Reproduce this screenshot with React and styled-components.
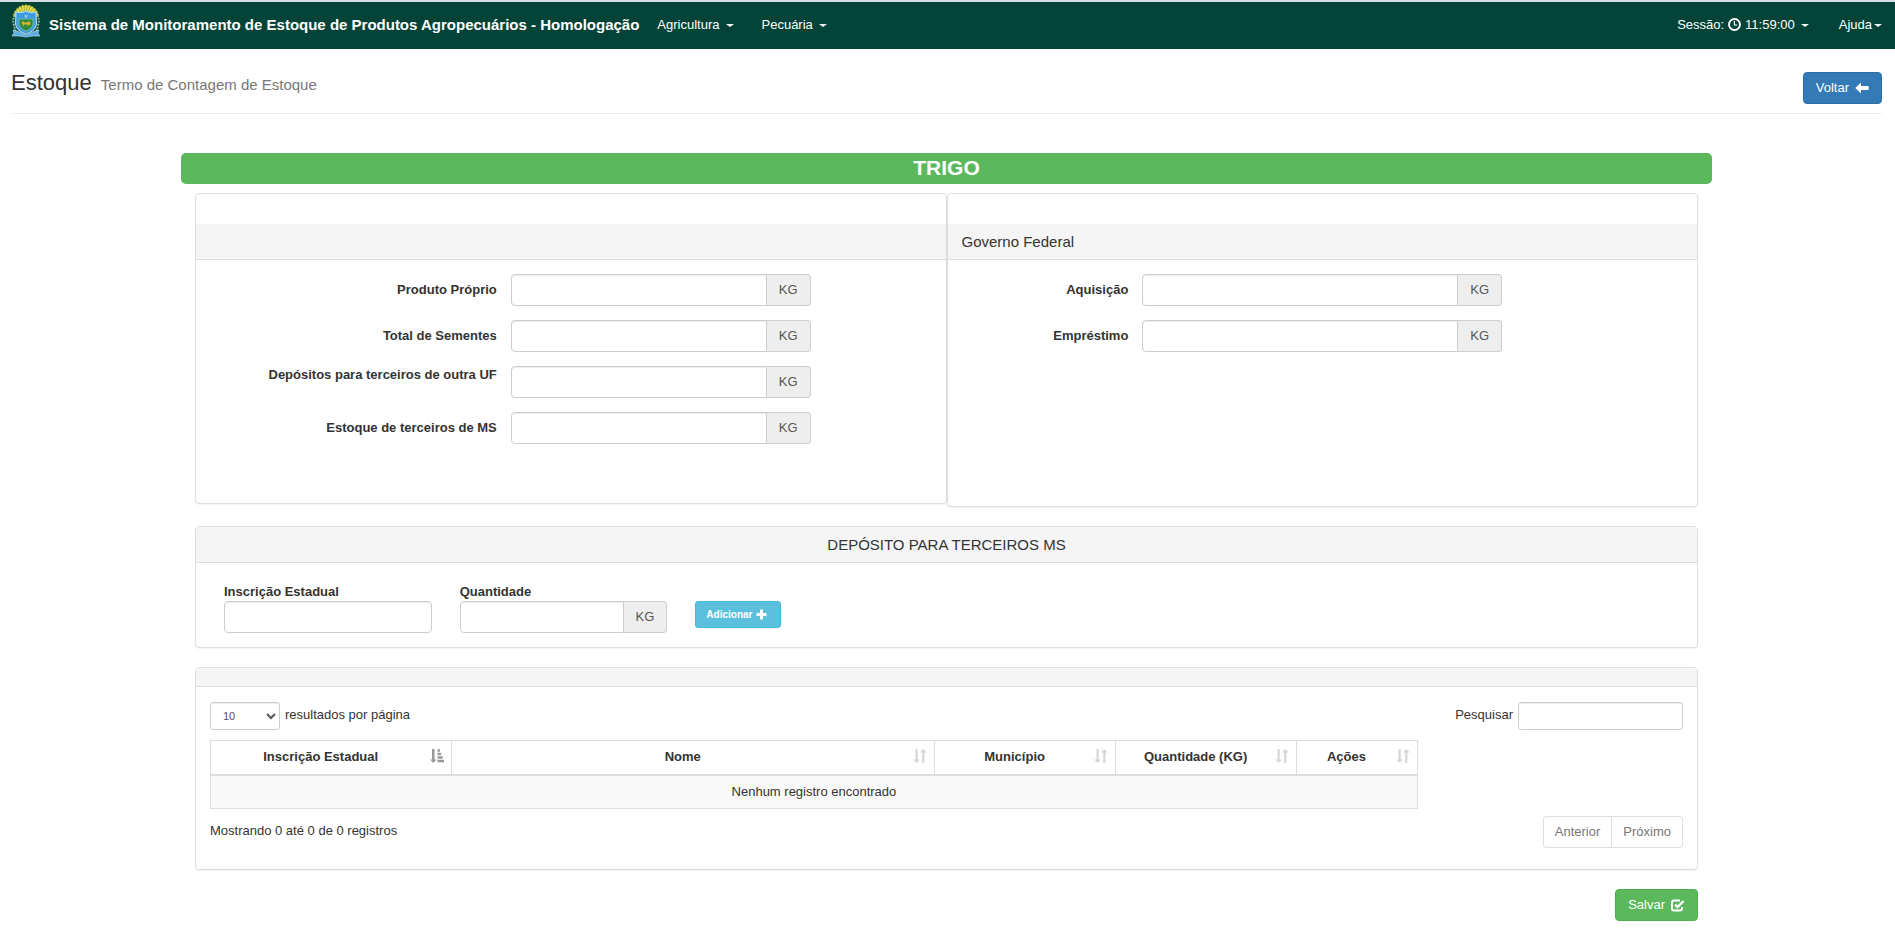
import styled, { createGlobalStyle } from "styled-components"

const GlobalStyle = createGlobalStyle`
    * {
        box-sizing: border-box;
    }

    body {
        margin: 0;
        background: #fff;
        color: #333;
        font-family: "Liberation Sans", Arial, Helvetica, sans-serif;
        font-size: 13px;
        line-height: 18px;
    }

    input, select, button {
        font-family: inherit;
    }
`

const stockFields = [
  { id: "produtoProprio", label: "Produto Próprio" },
  { id: "totalSementes", label: "Total de Sementes" },
  { id: "depositosOutraUf", label: "Depósitos para terceiros de outra UF", raised: true },
  { id: "estoqueMs", label: "Estoque de terceiros de MS" },
]

const federalFields = [
  { id: "aquisicao", label: "Aquisição" },
  { id: "emprestimo", label: "Empréstimo" },
]

const columns = [
  { title: "Inscrição Estadual", width: 20, sorted: true },
  { title: "Nome", width: 40 },
  { title: "Município", width: 15 },
  { title: "Quantidade (KG)", width: 15 },
  { title: "Ações", width: 10 },
]

const rays = [-75, -60, -45, -30, -15, 0, 15, 30, 45, 60, 75]

const Crest = () => (
  <svg width="30" height="34" viewBox="0 0 30 34" aria-hidden="true">
    {rays.map((angle) => (
      <path key={angle} d="M13.9 12 L13.1 1.6 L15 0.6 L16.9 1.6 L16.1 12 Z" fill="#e9e04a" stroke="#5d7d35" strokeWidth=".5" transform={`rotate(${angle} 15 14)`} />
    ))}
    <path d="M4 11 Q1 16 3 21 L4 26 L7 29 M26 11 Q29 16 27 21 L26 26 L23 29" fill="none" stroke="#8fb68f" strokeWidth="2" strokeDasharray="2 1" />
    <path d="M2 26 L8 28 L15 31 L22 28 L28 26 L27 29 L29 32 L22 32 L15 33 L8 32 L1 32 L3 29 Z" fill="#5eaee6" stroke="#b9dcf2" strokeWidth=".6" />
    <path d="M5 8 Q11 9.500 15 7 Q19 9.500 25 8 L25.500 20 Q24 27.500 15 30 Q6 27.500 4.500 20 Z" fill="#3d9be0" stroke="#a8d4ee" strokeWidth="1.200" />
    <path d="M8 15 H22 V20 Q21 25 15 27 Q9 25 8 20 Z" fill="#2d8a3e" stroke="#7cc0a0" strokeWidth=".8" />
    <path d="M10.500 18 L12 17.200 L13.500 18.500 L17 18 L19 17.200 L19.500 21 L18 20.500 L17.500 22.500 L16.500 20.500 L13 20.500 L12.500 22.500 L11.500 20.500 Z" fill="#dcb52c" />
    <path d="M15 9.800 L15.600 11.400 L17.200 11.400 L16 12.400 L16.400 14 L15 13 L13.600 14 L14 12.400 L12.800 11.400 L14.400 11.400 Z" fill="#9bd3f5" />
  </svg>
)

const ClockIcon = () => (
  <svg width="13" height="13" viewBox="0 0 13 13" aria-hidden="true">
    <circle cx="6.500" cy="6.500" r="5.500" fill="none" stroke="currentColor" strokeWidth="1.900" />
    <path d="M6.400 3 V7 H9.200" fill="none" stroke="currentColor" strokeWidth="1.200" />
  </svg>
)

const ArrowLeftIcon = () => (
  <svg width="14" height="13" viewBox="0 0 14 13" aria-hidden="true">
    <path d="M0.300 6 L6 0.600 V4 H13 Q13.600 4 13.600 4.600 V7.400 Q13.600 8 13 8 H6 V11.400 Z" fill="currentColor" />
  </svg>
)

const PlusIcon = () => (
  <svg width="11" height="11" viewBox="0 0 11 11" aria-hidden="true">
    <path d="M4 0.500 H7 V4 H10.500 V7 H7 V10.500 H4 V7 H0.500 V4 H4 Z" fill="currentColor" />
  </svg>
)

const CheckIcon = () => (
  <svg width="14" height="13" viewBox="0 0 14 13" aria-hidden="true">
    <path d="M9 1.500 H3 Q1 1.500 1 3.500 V9.500 Q1 11.500 3 11.500 H9 Q11 11.500 11 9.500 V8" fill="none" stroke="currentColor" strokeWidth="2" />
    <path d="M4 5.500 L6.500 8 L12.600 2" fill="none" stroke="currentColor" strokeWidth="2.400" />
  </svg>
)

const SortIcon = () => (
  <svg width="14" height="14" viewBox="0 0 14 14" aria-hidden="true">
    <path d="M2.500 0 H4.700 V10.500 H7 L3.600 14 L0.200 10.500 H2.500 Z" fill="currentColor" />
    <path d="M9.200 14 H11.400 V3.500 H13.700 L10.300 0 L6.900 3.500 H9.200 Z" fill="currentColor" />
  </svg>
)

const SortedIcon = () => (
  <svg width="14" height="14" viewBox="0 0 14 14" aria-hidden="true">
    <path d="M2 0 H4.500 V10.500 H6.600 L3.300 14 L0 10.500 H2 Z" fill="currentColor" />
    <path d="M7.500 0.300 H10 V2.800 H7.500 Z M7.500 3.800 H11.200 V6.300 H7.500 Z M7.500 7.300 H12.600 V9.800 H7.500 Z M7.500 10.800 H14 V13.300 H7.500 Z" fill="currentColor" />
  </svg>
)

const KgField = ({ id, label, raised, labelWidth, fieldWidth }) => (
  <FieldRow>
    <FieldLabel htmlFor={id} $raised={raised} $width={labelWidth}>{label}</FieldLabel>
    <InputGroup $width={fieldWidth}>
      <Input id={id} type="text" />
      <Addon>KG</Addon>
    </InputGroup>
  </FieldRow>
)

export default function App() {
  return (
    <>
      <GlobalStyle />
      <Navbar>
        <Brand href="#">
          <Crest />
          Sistema de Monitoramento de Estoque de Produtos Agropecuários - Homologação
        </Brand>
        <NavLink href="#">Agricultura <Caret /></NavLink>
        <NavLink href="#">Pecuária <Caret /></NavLink>
        <NavRight>
          <NavLink href="#">Sessão: <ClockIcon /> 11:59:00 <Caret /></NavLink>
          <NavLink href="#" $tight>Ajuda<Caret /></NavLink>
        </NavRight>
      </Navbar>

      <Page>
        <PageHeader>
          <Title>Estoque <small>Termo de Contagem de Estoque</small></Title>
          <Button type="button" $color="#337ab7" $border="#2e6da4">Voltar <ArrowLeftIcon /></Button>
        </PageHeader>

        <Content>
          <ProductBar>TRIGO</ProductBar>
          <Panels>
            <PanelRow>
              <Panel $spaced>
                <PanelHeading />
                <FormBody $minHeight={243}>
                  {stockFields.map((field) => (
                    <KgField key={field.id} {...field} labelWidth={42} fieldWidth={40} />
                  ))}
                </FormBody>
              </Panel>
              <Panel $spaced>
                <PanelHeading>Governo Federal</PanelHeading>
                <FormBody $minHeight={246}>
                  {federalFields.map((field) => (
                    <KgField key={field.id} {...field} labelWidth={26} fieldWidth={48} />
                  ))}
                </FormBody>
              </Panel>
            </PanelRow>

            <Panel>
              <PanelHeading $center>DEPÓSITO PARA TERCEIROS MS</PanelHeading>
              <DepositForm>
                <DepositColumn>
                  <label htmlFor="inscricao">Inscrição Estadual</label>
                  <Input id="inscricao" type="text" />
                </DepositColumn>
                <DepositColumn>
                  <label htmlFor="quantidade">Quantidade</label>
                  <InputGroup>
                    <Input id="quantidade" type="text" />
                    <Addon>KG</Addon>
                  </InputGroup>
                </DepositColumn>
                <AddColumn>
                  <SmallButton type="button" $color="#5bc0de" $border="#46b8da">Adicionar <PlusIcon /></SmallButton>
                </AddColumn>
              </DepositForm>
            </Panel>

            <Panel>
              <PanelHeading $empty />
              <TableBody>
                <Toolbar>
                  <ToolLabel>
                    <PageSize defaultValue="10">
                      <option>10</option>
                      <option>25</option>
                      <option>50</option>
                      <option>100</option>
                    </PageSize>
                    resultados por página
                  </ToolLabel>
                  <ToolLabel>
                    Pesquisar
                    <SearchInput type="search" />
                  </ToolLabel>
                </Toolbar>
                <Table>
                  <thead>
                    <tr>
                      {columns.map(({ title, width, sorted }) => (
                        <HeaderCell key={title} scope="col" $width={width} $sorted={sorted}>
                          {title}
                          {sorted ? <SortedIcon /> : <SortIcon />}
                        </HeaderCell>
                      ))}
                    </tr>
                  </thead>
                  <tbody>
                    <tr>
                      <EmptyCell colSpan={columns.length}>Nenhum registro encontrado</EmptyCell>
                    </tr>
                  </tbody>
                </Table>
                <TableFooter>
                  <p>Mostrando 0 até 0 de 0 registros</p>
                  <Pager>
                    <button type="button">Anterior</button>
                    <button type="button">Próximo</button>
                  </Pager>
                </TableFooter>
              </TableBody>
            </Panel>

            <Actions>
              <Button type="submit" $color="#5cb85c" $border="#4cae4c">Salvar <CheckIcon /></Button>
            </Actions>
          </Panels>
        </Content>
      </Page>
    </>
  )
}

const Navbar = styled.nav`
    display: flex;
    align-items: stretch;
    height: 49px;
    padding: 0 13px 0 11px;
    border-top: 2px solid #d5dfe3;
    background: #044438;
    color: #fff;
`

const Brand = styled.a`
    display: flex;
    gap: 8px;
    padding-right: 4px;
    color: #fff;
    font-size: 15px;
    font-weight: bold;
    line-height: 45px;
    text-decoration: none;
    white-space: nowrap;

    svg {
        margin-top: 2px;
    }
`

const NavLink = styled.a`
    display: flex;
    align-items: center;
    gap: ${({ $tight }) => ($tight ? "2px" : "4px")};
    padding: ${({ $tight }) => ($tight ? "0 0 2px 16px" : "0 14px 2px")};
    color: #fff;
    text-decoration: none;
    white-space: nowrap;
`

const NavRight = styled.div`
    display: flex;
    margin-left: auto;
`

const Caret = styled.span`
    margin: 2px 0 0 2px;
    border-top: 3px solid currentColor;
    border-left: 4px solid transparent;
    border-right: 4px solid transparent;

    ${NavLink}:last-child & {
        margin-left: 0;
    }
`

const Page = styled.main`
    padding: 0 13px 19px 11px;
`

const PageHeader = styled.header`
    display: flex;
    align-items: flex-end;
    justify-content: space-between;
    padding: 22px 0 9px;
    margin-bottom: 39px;
    border-bottom: 1px solid #eee;
`

const Title = styled.h1`
    margin: 0;
    padding-bottom: 9px;
    font-size: 22px;
    font-weight: 500;
    line-height: 24px;

    small {
        margin-left: 3px;
        color: #777;
        font-size: 15px;
        font-weight: normal;
        line-height: 15px;
    }
`

const Button = styled.button`
    display: inline-flex;
    align-items: center;
    gap: 6px;
    padding: 6px 12px;
    border: 1px solid ${({ $border }) => $border};
    border-radius: 4px;
    background: ${({ $color }) => $color};
    color: #fff;
    font-size: 13px;
    line-height: 18px;
    cursor: pointer;
`

const SmallButton = styled(Button)`
    gap: 4px;
    padding: 4px 13px 4px 10px;
    border-radius: 3px;
    font-size: 10px;
    font-weight: bold;
    line-height: 17px;
`

const Content = styled.div`
    margin: 0 170px;
`

const ProductBar = styled.h2`
    margin: 0 0 9px;
    padding-bottom: 2px;
    border-radius: 5px;
    background: #5cb85c;
    color: #fff;
    font-size: 21px;
    line-height: 29px;
    text-align: center;
`

const Panels = styled.div`
    display: flex;
    flex-direction: column;
    gap: 19px;
    padding: 0 14px;
`

const PanelRow = styled.div`
    display: grid;
    grid-template-columns: 1fr 1fr;
    align-items: start;
`

const Panel = styled.section`
    padding-top: ${({ $spaced }) => ($spaced ? "30px" : "0")};
    border: 1px solid #ddd;
    border-radius: 4px;
    background: #fff;
    box-shadow: 0 1px 1px rgba(0, 0, 0, .05);
`

const PanelHeading = styled.h3`
    margin: 0;
    padding: 9px 14px;
    min-height: ${({ $empty }) => ($empty ? "19px" : "36px")};
    border-bottom: 1px solid #ddd;
    background: #f5f5f5;
    font-size: 15px;
    font-weight: 500;
    line-height: 17px;
    text-align: ${({ $center }) => ($center ? "center" : "left")};
`

const FormBody = styled.div`
    display: flex;
    flex-direction: column;
    gap: 14px;
    min-height: ${({ $minHeight }) => $minHeight}px;
    padding: 14px 0;
`

const FieldRow = styled.div`
    display: flex;
`

const FieldLabel = styled.label`
    width: ${({ $width }) => $width}%;
    padding-top: ${({ $raised }) => ($raised ? "0" : "7px")};
    padding-right: 14px;
    font-weight: bold;
    text-align: right;
`

const InputGroup = styled.div`
    display: flex;
    width: ${({ $width = 100 }) => $width}%;
`

const Input = styled.input`
    flex: 1;
    width: 100%;
    min-width: 0;
    height: 32px;
    padding: 6px 12px;
    border: 1px solid #ccc;
    border-radius: 4px;
    color: #555;
    font-size: 13px;
    box-shadow: inset 0 1px 1px rgba(0, 0, 0, .075);

    ${InputGroup} & {
        border-radius: 4px 0 0 4px;
    }
`

const Addon = styled.span`
    padding: 6px 12px;
    border: 1px solid #ccc;
    border-left: 0;
    border-radius: 0 4px 4px 0;
    background: #eee;
    color: #555;
`

const DepositForm = styled.form`
    display: flex;
    padding: 20px 14px 14px;
`

const DepositColumn = styled.div`
    width: 16%;
    padding: 0 14px;

    label {
        display: block;
        font-weight: bold;
    }
`

const AddColumn = styled.div`
    padding: 18px 14px 0;
`

const TableBody = styled.div`
    padding: 15px 14px 21px;
`

const Toolbar = styled.div`
    display: flex;
    justify-content: space-between;
    margin-bottom: 10px;
`

const ToolLabel = styled.label`
    display: flex;
    gap: 5px;
    line-height: 26px;
`

const PageSize = styled.select`
    width: 70px;
    height: 28px;
    padding: 4px 8px;
    border: 1px solid #ccc;
    border-radius: 3px;
    background: #fff;
    color: #555;
    font-size: 11px;
    box-shadow: inset 0 1px 1px rgba(0, 0, 0, .075);
`

const SearchInput = styled.input`
    width: 165px;
    height: 28px;
    padding: 4px 10px;
    border: 1px solid #ccc;
    border-radius: 3px;
    font-size: 11px;
    box-shadow: inset 0 1px 1px rgba(0, 0, 0, .075);
`

const Table = styled.table`
    width: 82%;
    border: 1px solid #ddd;
    border-collapse: collapse;
    table-layout: fixed;
`

const HeaderCell = styled.th`
    position: relative;
    width: ${({ $width }) => $width}%;
    padding: 7px 29px 8px 8px;
    border: 1px solid #ddd;
    border-bottom-width: 2px;
    font-weight: bold;
    text-align: center;
    white-space: nowrap;

    svg {
        position: absolute;
        top: 8px;
        right: 7px;
        color: ${({ $sorted }) => ($sorted ? "#999" : "#d6d6d6")};
    }
`

const EmptyCell = styled.td`
    padding: 7px 8px;
    background: #f9f9f9;
    text-align: center;
`

const TableFooter = styled.div`
    display: flex;
    align-items: flex-start;
    justify-content: space-between;
    padding-top: 7px;

    p {
        margin: 0;
        padding-top: 6px;
    }
`

const Pager = styled.div`
    display: flex;

    button {
        padding: 6px 11px;
        border: 1px solid #ddd;
        background: #fff;
        color: #777;
        font-size: 13px;
        line-height: 18px;
    }

    button:first-child {
        border-right: 0;
        border-radius: 4px 0 0 4px;
    }

    button:last-child {
        border-radius: 0 4px 4px 0;
    }
`

const Actions = styled.div`
    display: flex;
    justify-content: flex-end;
`
